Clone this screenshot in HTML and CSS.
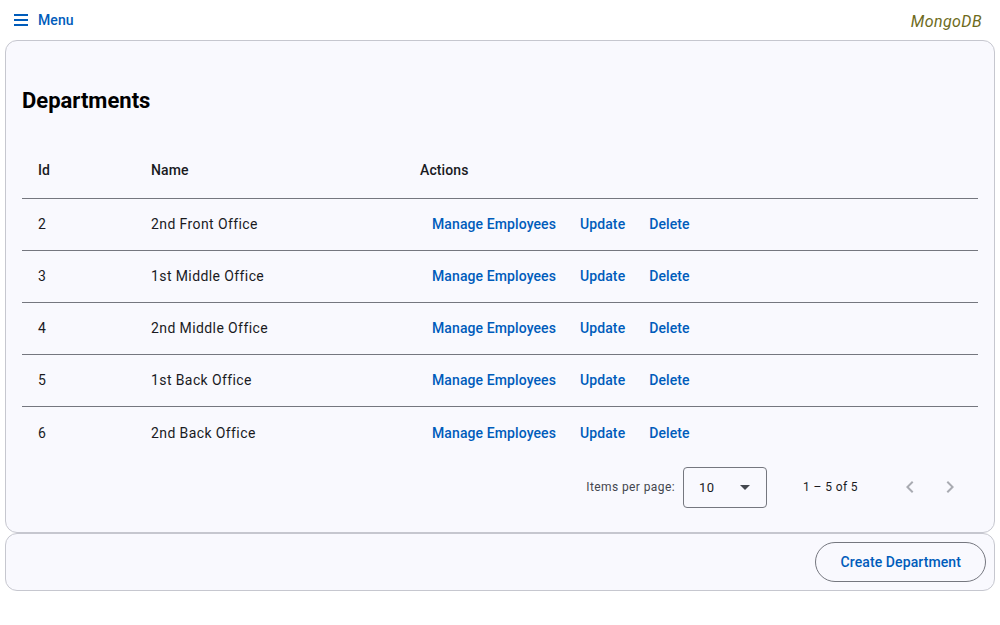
FILE: index.html
```html
<!DOCTYPE html>
<html>
<head>
<meta charset="utf-8">
<link rel="stylesheet" href="styles.css">
</head>
<body>
<header class="topbar">
  <button class="menu-btn">
    <svg class="menu-icon" width="14" height="12" viewBox="0 0 14 12"><rect x="0" y="0" width="14" height="2" fill="#005cbb"/><rect x="0" y="5" width="14" height="2" fill="#005cbb"/><rect x="0" y="10" width="14" height="2" fill="#005cbb"/></svg>
    <span>Menu</span>
  </button>
  <span class="brand">MongoDB</span>
</header>

<section class="card main-card">
  <h2 class="title">Departments</h2>
  <div class="table">
    <div class="row head">
      <div class="cell">Id</div>
      <div class="cell">Name</div>
      <div class="cell">Actions</div>
    </div>
    <div class="row">
      <div class="cell">2</div>
      <div class="cell">2nd Front Office</div>
      <div class="cell actions"><a class="link">Manage Employees</a><a class="link">Update</a><a class="link">Delete</a></div>
    </div>
    <div class="row">
      <div class="cell">3</div>
      <div class="cell">1st Middle Office</div>
      <div class="cell actions"><a class="link">Manage Employees</a><a class="link">Update</a><a class="link">Delete</a></div>
    </div>
    <div class="row">
      <div class="cell">4</div>
      <div class="cell">2nd Middle Office</div>
      <div class="cell actions"><a class="link">Manage Employees</a><a class="link">Update</a><a class="link">Delete</a></div>
    </div>
    <div class="row">
      <div class="cell">5</div>
      <div class="cell">1st Back Office</div>
      <div class="cell actions"><a class="link">Manage Employees</a><a class="link">Update</a><a class="link">Delete</a></div>
    </div>
    <div class="row last">
      <div class="cell">6</div>
      <div class="cell">2nd Back Office</div>
      <div class="cell actions"><a class="link">Manage Employees</a><a class="link">Update</a><a class="link">Delete</a></div>
    </div>
  </div>
  <div class="paginator">
    <span class="pg-label">Items per page:</span>
    <div class="pg-select">
      <span>10</span>
      <span class="caret"></span>
    </div>
    <span class="pg-range">1 – 5 of 5</span>
    <div class="pg-nav">
      <svg width="24" height="24" viewBox="0 0 24 24"><path d="M15.41 7.41L14 6l-6 6 6 6 1.41-1.41L10.83 12z" fill="#a9abb2"/></svg>
    </div>
    <div class="pg-nav">
      <svg width="24" height="24" viewBox="0 0 24 24"><path d="M10 6L8.59 7.41 13.17 12l-4.58 4.59L10 18l6-6z" fill="#a9abb2"/></svg>
    </div>
  </div>
</section>

<section class="card foot-card">
  <button class="create-btn">Create Department</button>
</section>
</body>
</html>
```

FILE: styles.css
```css
* { box-sizing: border-box; }
body {
  margin: 0;
  background: #ffffff;
  font-family: Roboto, "Liberation Sans", Arial, sans-serif;
  color: #1a1b1f;
  font-size: 14px;
}
.topbar {
  height: 40px;
  display: flex;
  align-items: center;
  justify-content: space-between;
  padding: 0 18px 0 14px;
}
.menu-btn {
  display: flex;
  align-items: center;
  gap: 10px;
  background: none;
  border: none;
  padding: 0;
  font-family: inherit;
  font-size: 14px;
  font-weight: 500;
  color: #005cbb;
  letter-spacing: 0.1px;
}
.menu-icon { display: block; }
.brand {
  font-style: italic;
  font-size: 16px;
  color: #6e6b1c;
  margin-top: 2px;
  letter-spacing: 0.4px;
}
.card {
  margin: 0 5px;
  background: #f9f9fe;
  border: 1px solid #c6c7cf;
  border-radius: 12px;
}
.main-card {
  padding: 16px 16px 17px 16px;
}
.title {
  margin: 0;
  height: 86px;
  display: flex;
  align-items: center;
  font-size: 22px;
  font-weight: 700;
  color: #000;
}
.table { display: flex; flex-direction: column; }
.row {
  display: grid;
  grid-template-columns: 113px 269px 1fr;
  height: 52px;
  padding-bottom: 2px;
  border-bottom: 1px solid #75777f;
  align-items: center;
  letter-spacing: 0.4px;
}
.row.head { height: 56px; font-weight: 500; letter-spacing: 0.1px; padding-bottom: 2px; }
.row.last { border-bottom: none; padding-bottom: 0; }
.cell { padding: 0 16px; }
.actions { display: flex; }
.link {
  padding: 0 12px;
  height: 40px;
  display: inline-flex;
  align-items: center;
  min-width: 64px;
  justify-content: center;
  color: #005cbb;
  font-weight: 500;
  letter-spacing: 0.1px;
}
.paginator {
  height: 56px;
  display: flex;
  align-items: center;
  justify-content: flex-end;
  padding: 0 8px;
  font-size: 12px;
  color: #44474e;
  letter-spacing: 0.4px;
}
.pg-label { margin-right: 8px; }
.pg-select {
  width: 84px;
  height: 41px;
  border: 1px solid #75777f;
  border-radius: 4px;
  display: flex;
  align-items: center;
  justify-content: space-between;
  padding: 0 16px 0 15px;
  font-size: 13px;
  color: #1a1b1f;
  margin-right: 36px;
}
.caret {
  width: 0;
  height: 0;
  border-left: 5px solid transparent;
  border-right: 5px solid transparent;
  border-top: 5px solid #44474e;
}
.pg-range { margin-right: 32px; color: #1a1b1f; font-size: 12px; }
.pg-nav {
  width: 40px;
  height: 40px;
  display: flex;
  align-items: center;
  justify-content: center;
}
.foot-card {
  height: 58px;
  display: flex;
  align-items: center;
  justify-content: flex-end;
  padding: 0 8px;
}
.create-btn {
  height: 40px;
  padding: 0 24px;
  border: 1px solid #75777f;
  border-radius: 20px;
  background: transparent;
  font-family: inherit;
  font-size: 14px;
  font-weight: 500;
  color: #005cbb;
  letter-spacing: 0.1px;
}
```
